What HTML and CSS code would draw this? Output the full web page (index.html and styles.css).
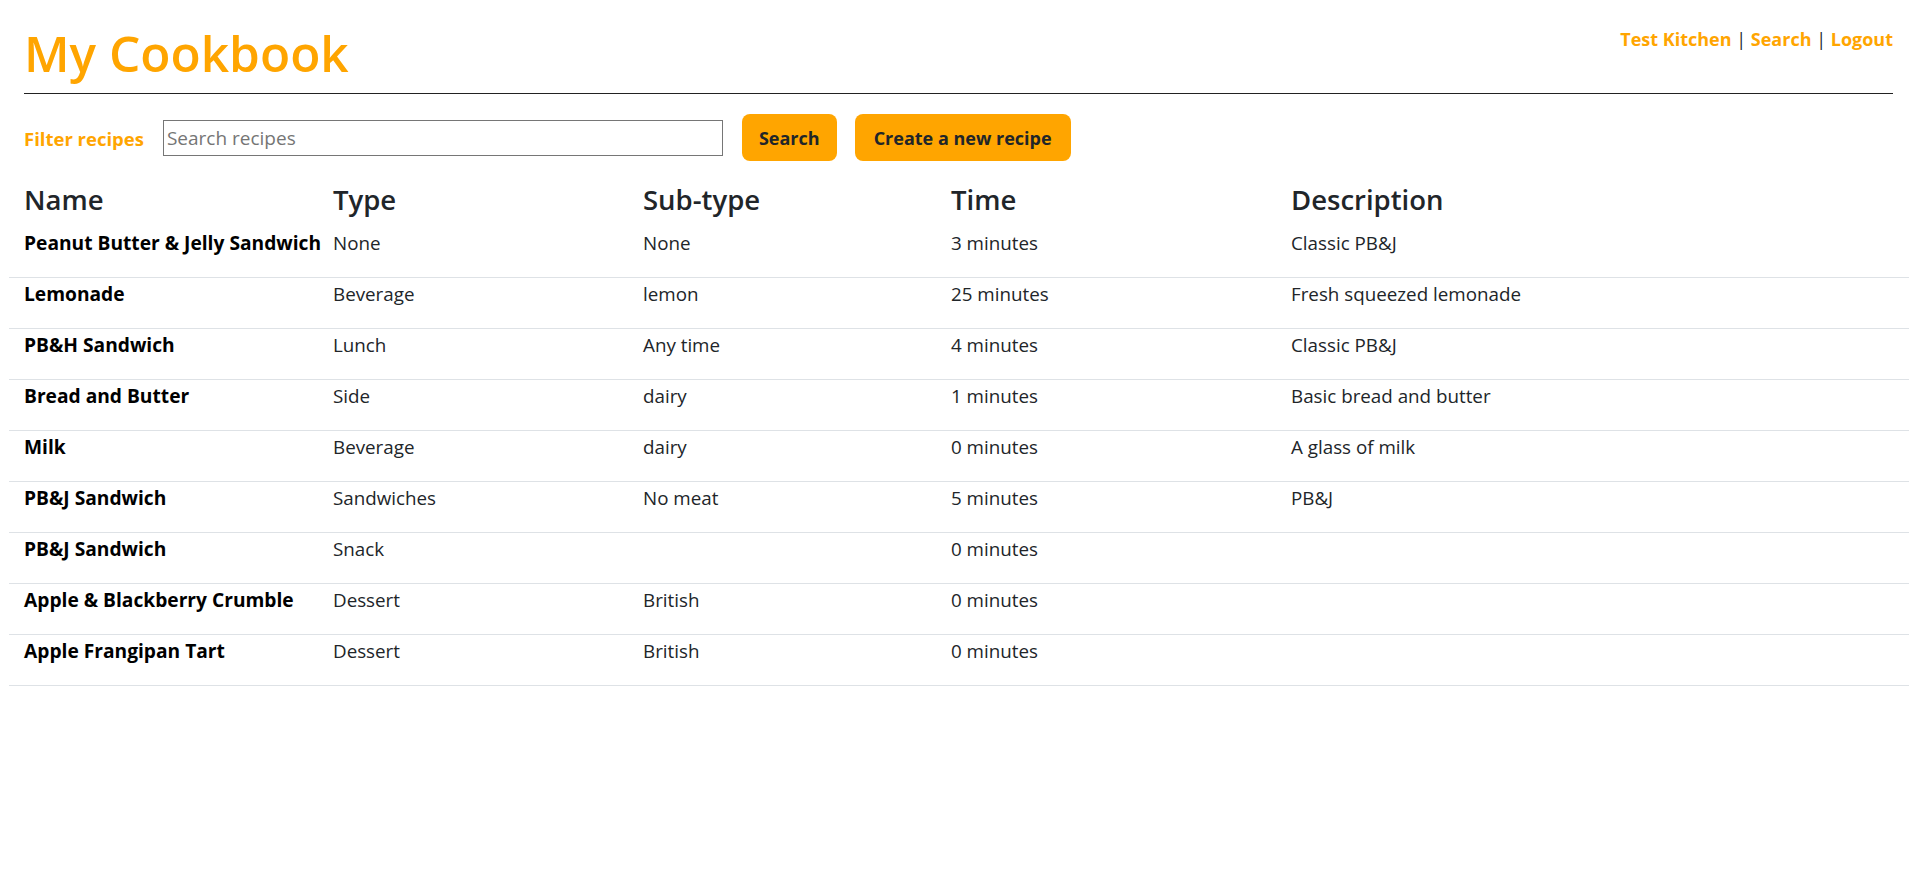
FILE: index.html
```html
<!DOCTYPE html>
<html lang="en">
<head>
<meta charset="utf-8">
<title>My Cookbook</title>
<link rel="stylesheet" href="styles.css">
</head>
<body>
<header class="topbar">
  <h1 class="brand">My Cookbook</h1>
  <nav class="nav">
    <a class="nav-link" href="#">Test Kitchen</a> | <a class="nav-link" href="#">Search</a> | <a class="nav-link" href="#">Logout</a>
  </nav>
</header>
<hr class="rule">
<form class="filter" onsubmit="return false">
  <label class="filter-label" for="q">Filter recipes</label>
  <input class="filter-input" id="q" type="text" placeholder="Search recipes">
  <button class="btn" type="submit">Search</button>
  <button class="btn btn-wide" type="button">Create a new recipe</button>
</form>
<table class="recipes">
  <colgroup>
    <col class="c-name"><col class="c-type"><col class="c-sub"><col class="c-time"><col class="c-desc">
  </colgroup>
  <thead>
    <tr><th>Name</th><th>Type</th><th>Sub-type</th><th>Time</th><th>Description</th></tr>
  </thead>
  <tbody>
    <tr><td class="name">Peanut Butter &amp; Jelly Sandwich</td><td>None</td><td>None</td><td>3 minutes</td><td>Classic PB&amp;J</td></tr>
    <tr><td class="name">Lemonade</td><td>Beverage</td><td>lemon</td><td>25 minutes</td><td>Fresh squeezed lemonade</td></tr>
    <tr><td class="name">PB&amp;H Sandwich</td><td>Lunch</td><td>Any time</td><td>4 minutes</td><td>Classic PB&amp;J</td></tr>
    <tr><td class="name">Bread and Butter</td><td>Side</td><td>dairy</td><td>1 minutes</td><td>Basic bread and butter</td></tr>
    <tr><td class="name">Milk</td><td>Beverage</td><td>dairy</td><td>0 minutes</td><td>A glass of milk</td></tr>
    <tr><td class="name">PB&amp;J Sandwich</td><td>Sandwiches</td><td>No meat</td><td>5 minutes</td><td>PB&amp;J</td></tr>
    <tr><td class="name">PB&amp;J Sandwich</td><td>Snack</td><td></td><td>0 minutes</td><td></td></tr>
    <tr><td class="name">Apple &amp; Blackberry Crumble</td><td>Dessert</td><td>British</td><td>0 minutes</td><td></td></tr>
    <tr><td class="name">Apple Frangipan Tart</td><td>Dessert</td><td>British</td><td>0 minutes</td><td></td></tr>
  </tbody>
</table>
</body>
</html>
```
FILE: styles.css
```css
html, body {
  margin: 0;
  padding: 0;
  background: #fff;
}

body {
  font-family: "Open Sans", "Noto Sans", sans-serif;
  color: #212529;
  font-size: 18px;
}

.topbar {
  display: flex;
  justify-content: space-between;
  align-items: flex-start;
  padding: 23px 26px 0 24px;
}

.brand {
  margin: 0;
  font-size: 49.5px;
  font-weight: 600;
  line-height: 61px;
  color: #ffa500;
}

.nav {
  margin-top: 2.5px;
  font-size: 18px;
  line-height: 27px;
  color: #212529;
}

.nav-link {
  color: #ffa500;
  font-weight: 700;
  text-decoration: none;
}

.rule {
  margin: 9px 26px 0 24px;
  border: 0;
  border-top: 1px solid #222;
  height: 0;
}

.filter {
  display: flex;
  align-items: center;
  margin: 20px 26px 0 24px;
}

.filter-label {
  font-size: 18.5px;
  font-weight: 700;
  color: #ffa500;
  margin-right: 19px;
  margin-top: 2px;
  line-height: 27px;
}

.filter-input {
  box-sizing: border-box;
  width: 560px;
  height: 36px;
  margin: 1px 19px 0 0;
  padding: 0 3px;
  border: 1px solid #767676;
  border-radius: 0;
  font-family: inherit;
  font-size: 19px;
  color: #212529;
  background: #fff;
}

.filter-input::placeholder {
  color: #757575;
}

.btn {
  height: 47px;
  padding: 0 17px;
  margin-right: 18px;
  border: 0;
  border-radius: 8px;
  background: #ffa500;
  color: #212529;
  font-family: inherit;
  font-size: 18px;
  font-weight: 700;
  cursor: pointer;
}

.btn-wide {
  padding: 0 19px;
}

.recipes {
  margin: 16px 0 0 9px;
  width: 1900px;
  table-layout: fixed;
  border-collapse: collapse;
}

.c-name { width: 309px; }
.c-type { width: 310px; }
.c-sub { width: 308px; }
.c-time { width: 340px; }
.c-desc { width: 633px; }

.recipes th {
  text-align: left;
  font-size: 27.5px;
  font-weight: 600;
  line-height: 34px;
  color: #212529;
  padding: 6px 15px 10px;
  white-space: nowrap;
}

.recipes td {
  font-size: 18.8px;
  line-height: 28px;
  padding: 2px 15px 20px;
  vertical-align: top;
  color: #212529;
  white-space: nowrap;
}

.recipes tbody tr {
  border-bottom: 1px solid #dee2e6;
}

.recipes td.name {
  font-size: 19.2px;
  font-weight: 700;
  color: #000;
}
```
